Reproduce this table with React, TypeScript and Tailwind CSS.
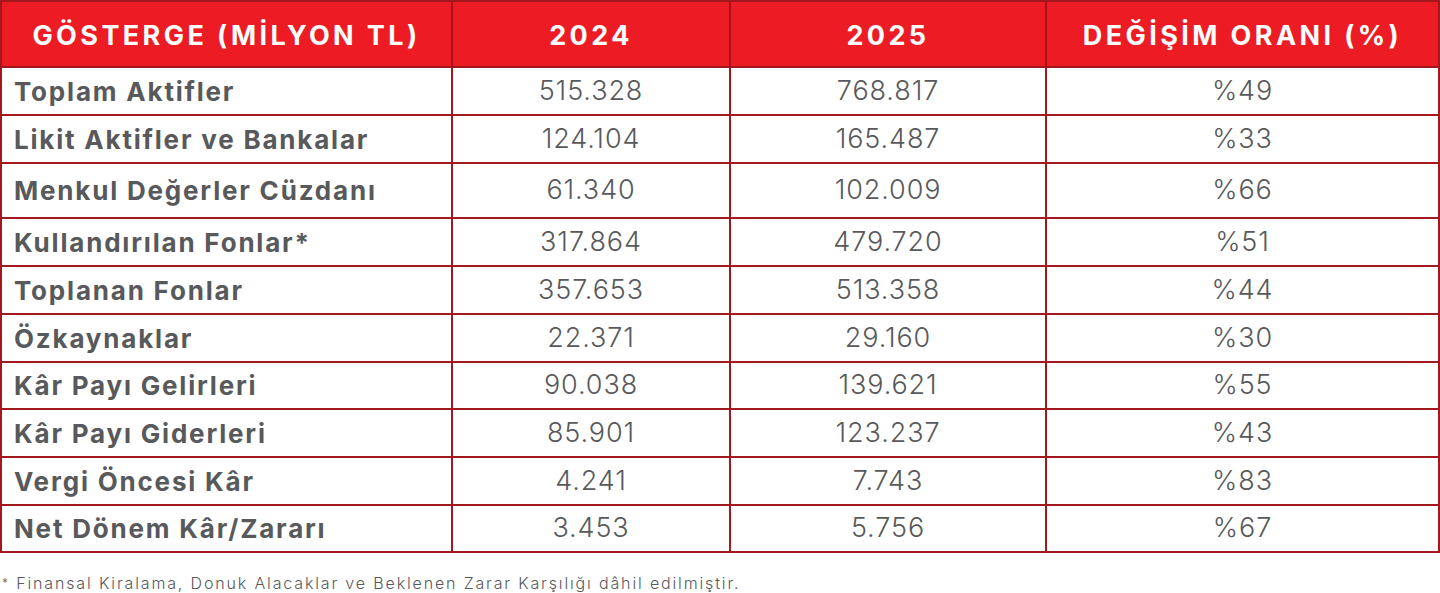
import React from "react";

const rows: { label: string; a: string; b: string; c: string; h: string }[] = [
  { label: "Toplam Aktifler", a: "515.328", b: "768.817", c: "%49", h: "h-[48px]" },
  { label: "Likit Aktifler ve Bankalar", a: "124.104", b: "165.487", c: "%33", h: "h-[48px]" },
  { label: "Menkul Değerler Cüzdanı", a: "61.340", b: "102.009", c: "%66", h: "h-[55px]" },
  { label: "Kullandırılan Fonlar*", a: "317.864", b: "479.720", c: "%51", h: "h-[48px]" },
  { label: "Toplanan Fonlar", a: "357.653", b: "513.358", c: "%44", h: "h-[48px]" },
  { label: "Özkaynaklar", a: "22.371", b: "29.160", c: "%30", h: "h-[48px]" },
  { label: "Kâr Payı Gelirleri", a: "90.038", b: "139.621", c: "%55", h: "h-[47px]" },
  { label: "Kâr Payı Giderleri", a: "85.901", b: "123.237", c: "%43", h: "h-[48px]" },
  { label: "Vergi Öncesi Kâr", a: "4.241", b: "7.743", c: "%83", h: "h-[48px]" },
  { label: "Net Dönem Kâr/Zararı", a: "3.453", b: "5.756", c: "%67", h: "h-[47px]" },
];

export default function App() {
  return (
    <div className="w-[1440px] h-[593px] bg-white font-['Inter',sans-serif] text-[#58595b]">
      <div className="border-2 border-[#a3181e]">
        <div className="grid grid-cols-[449px_278px_316px_393px] h-[64px] bg-[#ed1c24] text-white font-bold text-[27px] tracking-[3.4px]">
          <div className="flex items-center justify-center pt-[5px]">GÖSTERGE (MİLYON TL)</div>
          <div className="flex items-center justify-center pt-[5px] border-l-2 border-[#a8141a]">2024</div>
          <div className="flex items-center justify-center pt-[5px] border-l-2 border-[#a8141a]">2025</div>
          <div className="flex items-center justify-center pt-[5px] border-l-2 border-[#a8141a]">DEĞİŞİM ORANI (%)</div>
        </div>
        {rows.map((r) => (
          <div
            key={r.label}
            className={`grid grid-cols-[449px_278px_316px_393px] border-t-2 border-[#a3181e] ${r.h}`}
          >
            <div className="flex items-center pl-[12px] font-bold text-[26px] tracking-[1.8px]">{r.label}</div>
            <div className="flex items-center justify-center border-l-2 border-[#a3181e] font-light text-[27px] tracking-[0.9px]">{r.a}</div>
            <div className="flex items-center justify-center border-l-2 border-[#a3181e] font-light text-[27px] tracking-[0.9px]">{r.b}</div>
            <div className="flex items-center justify-center border-l-2 border-[#a3181e] font-light text-[27px] tracking-[0.9px]">{r.c}</div>
          </div>
        ))}
      </div>
      <div className="pt-[20px] pl-[2px] text-[16px] font-light leading-[20px] tracking-[1.85px]">
        <span className="text-[12px] align-top">*</span> Finansal Kiralama, Donuk Alacaklar ve Beklenen Zarar Karşılığı dâhil edilmiştir.
      </div>
    </div>
  );
}
